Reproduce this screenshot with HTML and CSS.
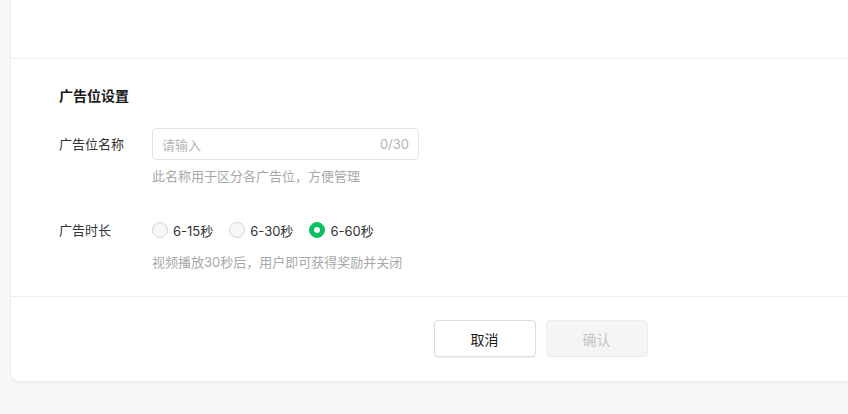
FILE: index.html
```html
<!DOCTYPE html>
<html lang="zh-CN">
<head>
<meta charset="utf-8">
<title>广告位设置</title>
<link rel="stylesheet" href="styles.css">
</head>
<body>
<div class="page">
  <div class="card">
    <div class="card-top"></div>
    <div class="section">
      <div class="section-title">广告位设置</div>
      <div class="form-row">
        <div class="label">广告位名称</div>
        <div class="control">
          <div class="input">
            <span class="placeholder">请输入</span>
            <span class="counter">0/30</span>
          </div>
          <div class="hint">此名称用于区分各广告位，方便管理</div>
        </div>
      </div>
      <div class="form-row row-radio">
        <div class="label">广告时长</div>
        <div class="control">
          <div class="radio-group">
            <label class="radio"><span class="dot"></span><span class="radio-text">6-15秒</span></label>
            <label class="radio"><span class="dot"></span><span class="radio-text">6-30秒</span></label>
            <label class="radio checked"><span class="dot"></span><span class="radio-text">6-60秒</span></label>
          </div>
          <div class="hint">视频播放30秒后，用户即可获得奖励并关闭</div>
        </div>
      </div>
    </div>
    <div class="footer">
      <button class="btn btn-default">取消</button>
      <button class="btn btn-disabled">确认</button>
    </div>
  </div>
</div>
</body>
</html>
```

FILE: styles.css
```css
* { box-sizing: border-box; }
html, body {
  margin: 0;
  padding: 0;
  background: #f7f8fa;
  overflow: hidden;
  font-family: "Inter", "Noto Sans CJK SC", sans-serif;
  color: #333;
}
.page {
  width: 848px;
  height: 414px;
  overflow: hidden;
  padding-left: 11px;
}
.card {
  width: 1059px;
  margin-top: -20px;
  background: #fff;
  border-radius: 8px;
  box-shadow: 0 0 0 1px #eceef1, 0 2px 4px rgba(0, 0, 0, 0.04);
}
.card-top {
  height: 79px;
  border-bottom: 1px solid #eeeeee;
}
.section {
  padding: 27px 0 25px 48px;
  border-bottom: 1px solid #eeeeee;
}
.section-title {
  font-size: 14px;
  line-height: 20px;
  font-weight: 600;
  color: #1a1a1a;
  margin-bottom: 22px;
}
.form-row {
  display: flex;
  align-items: flex-start;
}
.row-radio { margin-top: 29px; }
.label {
  width: 93px;
  flex: none;
  font-size: 13px;
  line-height: 32px;
  color: #333;
}
.control { display: flex; flex-direction: column; }
.input {
  width: 267px;
  height: 32px;
  border: 1px solid #e2e2e2;
  border-radius: 4px;
  display: flex;
  align-items: center;
  justify-content: space-between;
  padding: 0 9px 0 9px;
  font-size: 13px;
}
.placeholder { color: #b5b5b5; }
.counter { color: #b5b5b5; }
.hint {
  margin-top: 7px;
  font-size: 13px;
  line-height: 18px;
  color: #a8a8a8;
}
.radio-group {
  display: flex;
  align-items: center;
  height: 32px;
}
.radio {
  display: flex;
  align-items: center;
  margin-right: 16px;
  font-size: 13px;
  color: #333;
}
.dot {
  width: 16px;
  height: 16px;
  border-radius: 50%;
  border: 1px solid #d6d6d6;
  background: #f7f7f7;
  margin-right: 5px;
  display: flex;
  align-items: center;
  justify-content: center;
}
.radio.checked .dot {
  background: #07c160;
  border-color: #07c160;
}
.radio.checked .dot::after {
  content: "";
  width: 6px;
  height: 6px;
  border-radius: 50%;
  background: #fff;
}
.footer {
  display: flex;
  justify-content: center;
  gap: 10px;
  padding: 23px 0 24px;
}
.btn {
  width: 102px;
  height: 37px;
  border-radius: 4px;
  font-family: inherit;
  font-size: 14px;
  padding: 0;
}
.btn-default {
  background: #fff;
  border: 1px solid #dcdcdc;
  color: #1a1a1a;
  box-shadow: 0 1px 2px rgba(0, 0, 0, 0.06);
}
.btn-disabled {
  background: #f5f5f5;
  border: 1px solid #ececec;
  color: #c4c4c4;
}
```
